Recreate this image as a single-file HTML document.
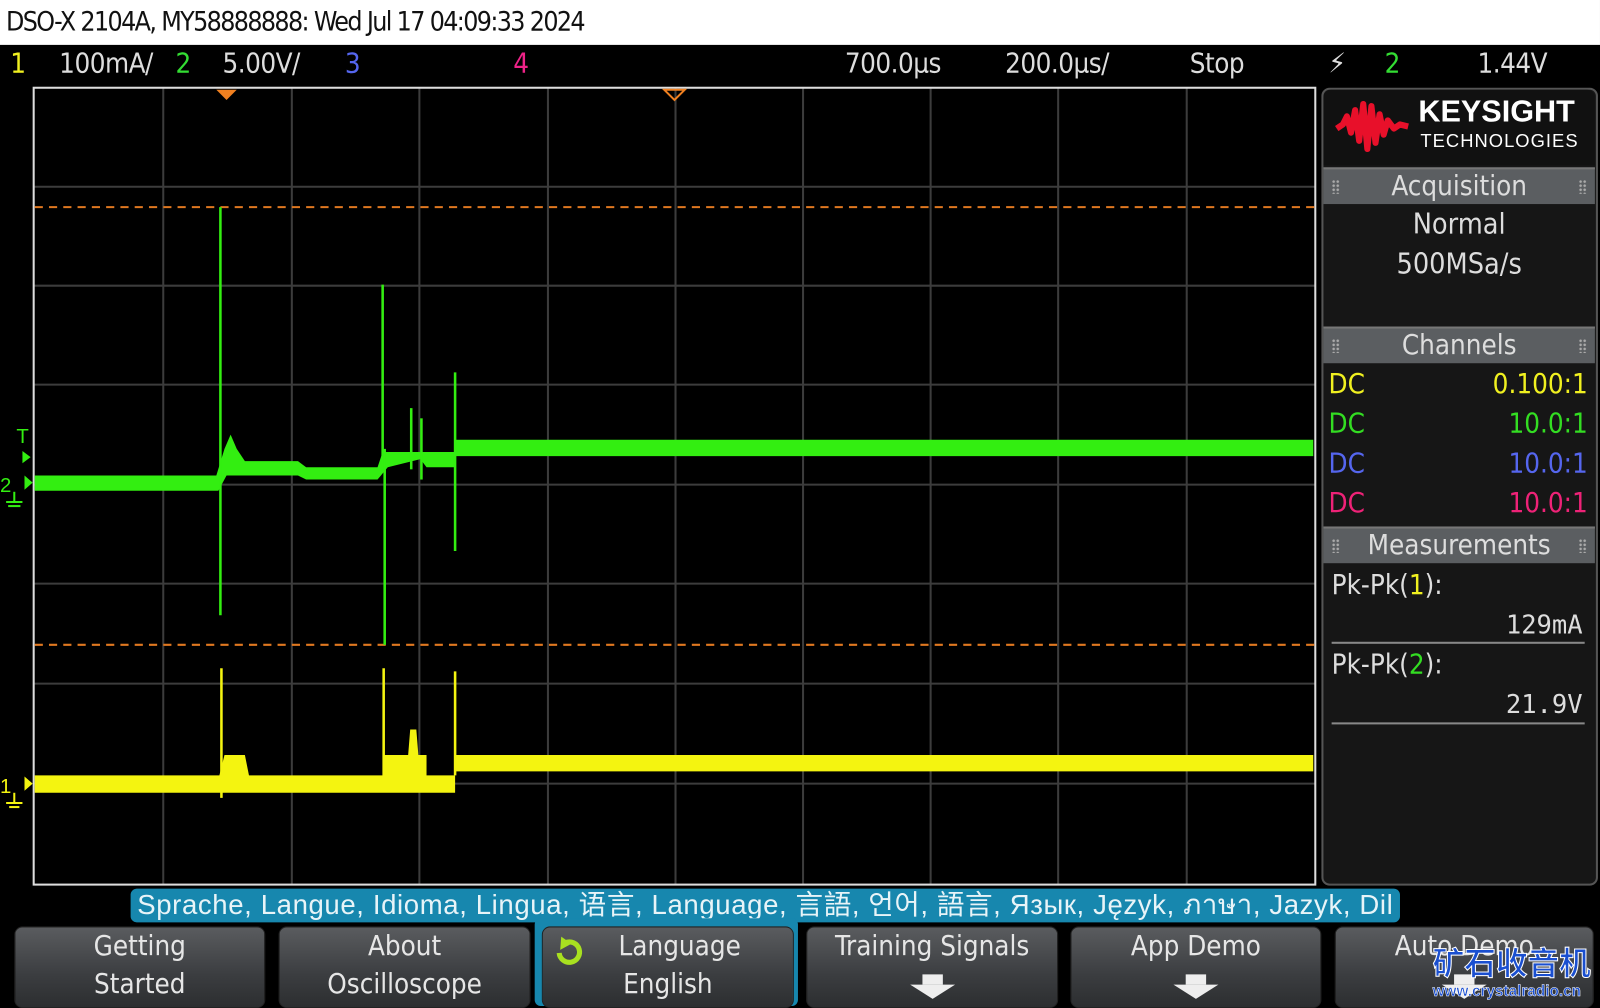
<!DOCTYPE html>
<html><head><meta charset="utf-8"><style>
html,body{margin:0;padding:0;background:#000;overflow:hidden;width:1600px;height:1006px}
#w{position:absolute;left:0;top:0;width:1568px;height:986px;transform:scale(1.0204,1.0203);transform-origin:0 0;background:#000;font-family:"Liberation Sans Narrow","DejaVu Sans Condensed","Liberation Sans","Noto Sans CJK SC",sans-serif}
.a{position:absolute;white-space:nowrap}
#hdr{left:0;top:0;width:1568px;height:44px;background:#fff;color:#111;font-size:26px;line-height:44px;letter-spacing:-1.6px}
.st{top:44px;font-size:27px;line-height:38px;color:#ddd;letter-spacing:-0.5px}
.ph{position:absolute;left:1297px;width:266px;height:34px;background:#5b5e61;color:#ddd;font-size:27px;line-height:34px;text-align:center;border-top:2px solid #777}
.dots{position:absolute;top:10px;width:8px;height:14px;background:radial-gradient(circle,#aaa 1px,transparent 1.5px) 0 0/4px 4px}
.row{position:absolute;left:1302px;width:254px;font-size:27px;line-height:38px}
.row span{float:right}
.btn{position:absolute;top:908px;height:78px;border-radius:8px;background:linear-gradient(#5a5c5f,#3b3d40 60%,#2c2e30);color:#e6e6e6;font-size:27px;line-height:37px;text-align:center;border:1px solid #222}
.arr{position:absolute;left:50%;margin-left:-22px;top:56px;width:0;height:0;border-left:22px solid transparent;border-right:22px solid transparent;border-top:14px solid #eee}
.arr:before{content:"";position:absolute;left:-10px;top:-24px;width:20px;height:10px;background:#eee}
</style></head><body><div id="w">
<div id="hdr" class="a">&nbsp;DSO-X 2104A, MY58888888: Wed Jul 17 04:09:33 2024</div>
<div class="a st" style="left:10px;color:#f0f020">1</div>
<div class="a st" style="left:58px">100mA/</div>
<div class="a st" style="left:172px;color:#33dd33">2</div>
<div class="a st" style="left:218px">5.00V/</div>
<div class="a st" style="left:338px;color:#5566ee">3</div>
<div class="a st" style="left:503px;color:#ee2288">4</div>
<div class="a st" style="left:828px">700.0µs</div>
<div class="a st" style="left:985px">200.0µs/</div>
<div class="a st" style="left:1166px">Stop</div>
<div class="a st" style="left:1302px">⚡</div>
<div class="a st" style="left:1357px;color:#33dd33">2</div>
<div class="a st" style="left:1448px">1.44V</div>

<svg class="a" style="left:0;top:0" width="1568" height="986">
<g stroke="#3c3c3c" stroke-width="2">
<line x1="160" y1="86" x2="160" y2="867"/><line x1="286" y1="86" x2="286" y2="867"/><line x1="411" y1="86" x2="411" y2="867"/><line x1="537" y1="86" x2="537" y2="867"/><line x1="787" y1="86" x2="787" y2="867"/><line x1="912" y1="86" x2="912" y2="867"/><line x1="1037" y1="86" x2="1037" y2="867"/><line x1="1163" y1="86" x2="1163" y2="867"/>
<line x1="33" y1="183" x2="1289" y2="183"/><line x1="33" y1="280" x2="1289" y2="280"/><line x1="33" y1="377" x2="1289" y2="377"/><line x1="33" y1="572" x2="1289" y2="572"/><line x1="33" y1="670" x2="1289" y2="670"/><line x1="33" y1="768" x2="1289" y2="768"/>
<line x1="662" y1="86" x2="662" y2="867"/><line x1="33" y1="475" x2="1289" y2="475"/>
</g>
<rect x="33" y="86" width="1256" height="781" fill="none" stroke="#ddd" stroke-width="2"/>
<g stroke="#e07820" stroke-width="2" stroke-dasharray="8 6"><line x1="34" y1="203" x2="1288" y2="203"/><line x1="34" y1="632" x2="1288" y2="632"/></g>
<polygon points="212,88 232,88 222,98" fill="#f08020"/>
<polygon points="651,88 671,88 661,98" fill="none" stroke="#f08020" stroke-width="2"/>
<g fill="#33ee11">
<polygon points="34,466 212,466 220,440 226,426 232,440 240,452 292,452 300,458 370,458 375,443 446,443 446,431 1287,431 1287,447 446,447 446,458 418,458 412,450 380,458 370,470 300,470 292,466 240,466 222,466 214,481 34,481"/>
</g>
<g stroke="#33ee11" stroke-width="2.5">
<line x1="216" y1="203" x2="216" y2="603"/><line x1="375" y1="279" x2="375" y2="460"/><line x1="377" y1="440" x2="377" y2="632"/><line x1="403" y1="400" x2="403" y2="460"/><line x1="413" y1="410" x2="413" y2="470"/><line x1="446" y1="365" x2="446" y2="540"/>
</g>
<g fill="#f4f410">
<polygon points="34,760 215,760 220,740 240,740 244,760 375,760 375,740 400,740 402,715 408,715 410,740 418,740 418,760 446,760 446,740 1287,740 1287,756 446,756 446,777 34,777"/>
</g>
<g stroke="#f4f410" stroke-width="2.5">
<line x1="217" y1="655" x2="217" y2="782"/><line x1="376" y1="655" x2="376" y2="770"/><line x1="446" y1="658" x2="446" y2="760"/>
</g>
<g fill="#33ee11"><polygon points="22,442 30,448 22,454"/><polygon points="24,466 32,473 24,480"/></g>
<text x="16" y="434" fill="#33ee11" font-size="20" font-family="Liberation Sans Narrow,sans-serif">T</text>
<text x="0" y="482" fill="#33ee11" font-size="20" font-family="Liberation Sans Narrow,sans-serif">2</text>
<line x1="14" y1="482" x2="14" y2="492" stroke="#33ee11" stroke-width="2"/>
<line x1="6" y1="492" x2="22" y2="492" stroke="#33ee11" stroke-width="2"/>
<line x1="8" y1="496" x2="20" y2="496" stroke="#33ee11" stroke-width="2"/>
<polygon points="24,761 32,768 24,775" fill="#f4f410"/>
<text x="0" y="777" fill="#f4f410" font-size="20" font-family="Liberation Sans Narrow,sans-serif">1</text>
<line x1="14" y1="777" x2="14" y2="787" stroke="#f4f410" stroke-width="2"/>
<line x1="6" y1="787" x2="22" y2="787" stroke="#f4f410" stroke-width="2"/>
<line x1="9" y1="791" x2="19" y2="791" stroke="#f4f410" stroke-width="2"/>
</svg>

<div class="a" style="left:1295px;top:86px;width:267px;height:778px;border:2px solid #555;border-radius:8px;background:#161616"></div>
<div class="a" style="left:1297px;top:88px;width:266px;height:74px;background:#111;border-radius:8px 8px 0 0"></div>
<svg class="a" style="left:1308px;top:94px" width="75" height="60"><path d="M2,32 L8,28 12,20 16,36 20,14 24,44 28,8 32,52 36,10 40,46 44,18 48,38 52,24 58,32 64,28 72,30" stroke="#e8102a" stroke-width="6" fill="none" stroke-linejoin="round"/></svg>
<div class="a" style="left:1390px;top:93px;color:#fff;font-family:'Liberation Sans',sans-serif;font-weight:bold;font-size:30px;line-height:34px">KEYSIGHT</div>
<div class="a" style="left:1392px;top:127px;color:#fff;font-family:'Liberation Sans',sans-serif;font-size:18px;line-height:22px;letter-spacing:1px">TECHNOLOGIES</div>

<div class="ph" style="top:164px">Acquisition<i class="dots" style="left:8px"></i><i class="dots" style="right:8px"></i></div>
<div class="a" style="left:1297px;top:200px;width:266px;text-align:center;color:#ddd;font-size:28px;line-height:39px">Normal<br>500MSa/s</div>
<div class="ph" style="top:320px">Channels<i class="dots" style="left:8px"></i><i class="dots" style="right:8px"></i></div>
<div class="row" style="top:358px;color:#f0f020">DC<span>0.100:1</span></div>
<div class="row" style="top:397px;color:#33dd22">DC<span>10.0:1</span></div>
<div class="row" style="top:436px;color:#5566ee">DC<span>10.0:1</span></div>
<div class="row" style="top:475px;color:#ee2277">DC<span>10.0:1</span></div>
<div class="ph" style="top:516px">Measurements<i class="dots" style="left:8px"></i><i class="dots" style="right:8px"></i></div>
<div class="a" style="left:1305px;top:555px;color:#ddd;font-size:27px;line-height:38px">Pk-Pk(<b style="color:#f0f020;font-weight:normal">1</b>):</div>
<div class="a" style="left:1305px;top:594px;width:246px;text-align:right;color:#ddd;line-height:38px;font-family:'DejaVu Sans Mono',monospace;font-size:25px">129mA</div>
<div class="a" style="left:1305px;top:629px;width:248px;height:2px;background:#888"></div>
<div class="a" style="left:1305px;top:633px;color:#ddd;font-size:27px;line-height:38px">Pk-Pk(<b style="color:#33dd22;font-weight:normal">2</b>):</div>
<div class="a" style="left:1305px;top:672px;width:246px;text-align:right;color:#ddd;line-height:38px;font-family:'DejaVu Sans Mono',monospace;font-size:25px">21.9V</div>
<div class="a" style="left:1305px;top:708px;width:248px;height:2px;background:#888"></div>

<div class="a" style="left:128px;top:871px;width:1244px;height:33px;background:#1787ae;border-radius:6px;color:#e8f4f8;font-size:27px;line-height:33px;text-align:center;letter-spacing:0.6px;font-family:'Liberation Sans Narrow','Liberation Sans','Noto Sans CJK SC',sans-serif">Sprache, Langue, Idioma, Lingua, 语言, Language, 言語, 언어, 語言, Язык, Język, ภาษา, Jazyk, Dil</div>
<div class="a" style="left:524px;top:900px;width:258px;height:86px;background:#1787ae;border-radius:6px"></div>
<div class="btn" style="left:14px;width:244px">Getting<br>Started</div>
<div class="btn" style="left:273px;width:245px">About<br>Oscilloscope</div>
<div class="btn" style="left:531px;width:245px">&nbsp;&nbsp;&nbsp;Language<br>English
<svg style="position:absolute;left:8px;top:8px" width="36" height="34"><path d="M8,17 A10,10 0 1 0 14,7" stroke="#a8e020" stroke-width="5" fill="none"/><polygon points="10,1 20,8 9,14" fill="#a8e020"/></svg></div>
<div class="btn" style="left:790px;width:245px">Training Signals<i class="arr"></i></div>
<div class="btn" style="left:1049px;width:244px">App Demo<i class="arr"></i></div>
<div class="btn" style="left:1308px;width:252px">Auto Demo<i class="arr"></i></div>
<div class="a" style="left:1404px;top:922px;color:#1a4fd0;font-size:31px;font-weight:bold;font-family:'Noto Sans CJK SC',sans-serif;line-height:40px;-webkit-text-stroke:1px #fff">矿石收音机</div>
<div class="a" style="left:1404px;top:962px;color:#1a4fd0;font-size:15px;font-weight:bold;font-family:'Liberation Sans',sans-serif;line-height:20px;-webkit-text-stroke:0.5px #fff">www.crystalradio.cn</div>
</div></body></html>
